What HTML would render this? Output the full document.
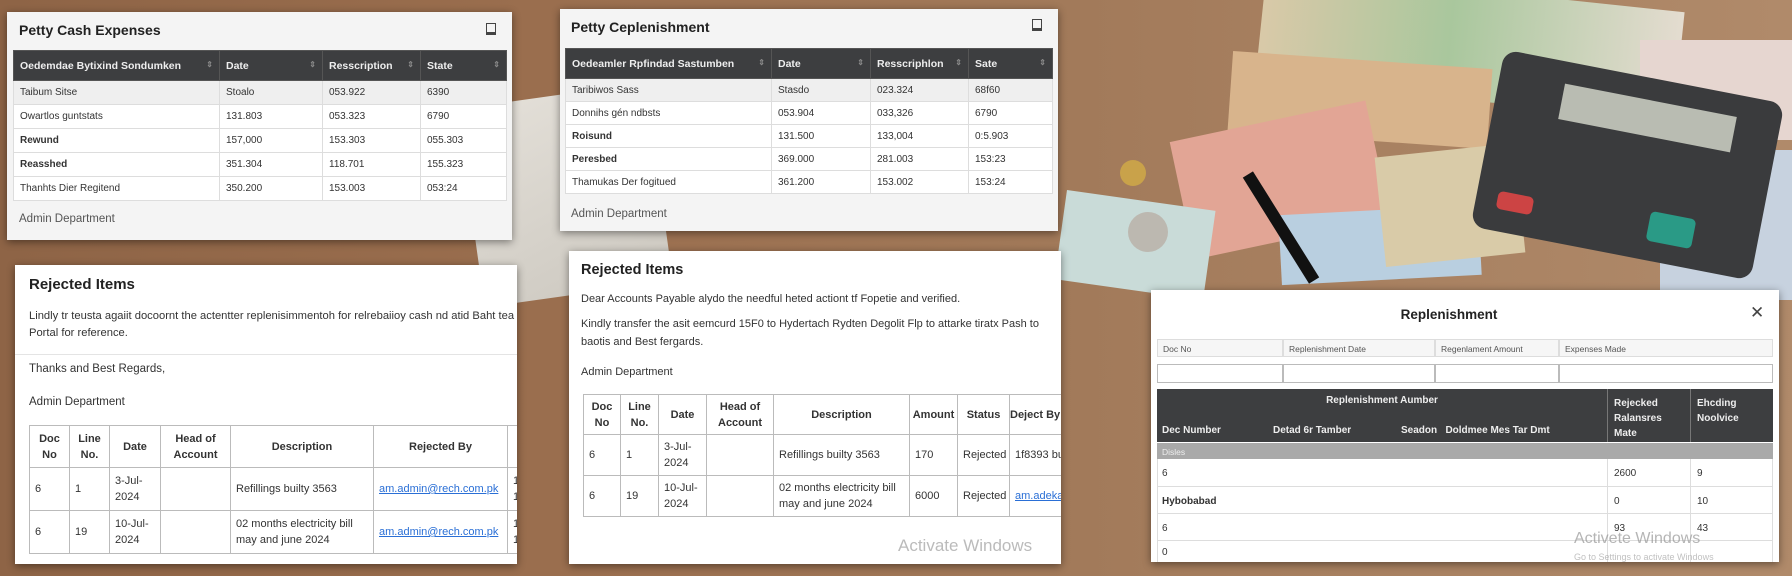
<!DOCTYPE html>
<html><head><meta charset="utf-8"><style>
*{box-sizing:border-box;margin:0;padding:0}
body{width:1792px;height:576px;overflow:hidden;position:relative;font-family:"Liberation Sans",sans-serif;color:#222;
background:linear-gradient(90deg,#8e6446 0%,#9a6e4e 30%,#a27a5a 60%,#b08a6a 100%)}
.abs{position:absolute}
.panel{position:absolute;background:#f4f4f4;box-shadow:0 2px 8px rgba(0,0,0,.45)}
.white{background:#fff}
table{border-collapse:collapse;position:absolute;table-layout:fixed}
.dt th{background:#3d3e40;color:#eee;font-size:10.5px;font-weight:bold;text-align:left;padding:0 6px;border:1px solid #555}
.dt td{font-size:10px;color:#333;padding:0 6px;border:1px solid #ddd;background:#fff}
.dt tr:first-child+tr td{background:#efefef}
.rt th{font-size:11px;font-weight:bold;border:1px solid #bbb;text-align:center;color:#333;line-height:16px}
.rt td{font-size:11px;border:1px solid #bbb;padding:0 5px;color:#333;line-height:16px}
a{color:#2a6fd6;text-decoration:underline}
.srt{float:right;color:#888;font-size:8px}
</style></head><body>
<!-- background decorations -->
<div class="abs" style="left:470px;top:95px;width:190px;height:200px;background:linear-gradient(160deg,#e8e6e0,#cfcdc6);transform:rotate(-8deg);opacity:.95"></div>
<div class="abs" style="left:1260px;top:-10px;width:420px;height:110px;background:linear-gradient(90deg,#d9c9a8,#a9c79d 45%,#e4dcd0);transform:rotate(6deg)"></div>
<div class="abs" style="left:1230px;top:60px;width:260px;height:80px;background:#d8b48c;transform:rotate(4deg)"></div>
<div class="abs" style="left:1180px;top:120px;width:200px;height:120px;background:#e2a595;transform:rotate(-12deg)"></div>
<div class="abs" style="left:1060px;top:200px;width:150px;height:90px;background:#c9dbd8;transform:rotate(8deg)"></div>
<div class="abs" style="left:1280px;top:210px;width:200px;height:70px;background:#b9cfe0;transform:rotate(-3deg)"></div>
<div class="abs" style="left:1380px;top:150px;width:140px;height:110px;background:#d9cba8;transform:rotate(-6deg)"></div>
<div class="abs" style="left:1640px;top:40px;width:152px;height:100px;background:#e6d6d0"></div>
<div class="abs" style="left:1660px;top:150px;width:132px;height:150px;background:#c7d2df"></div>
<div class="abs" style="left:1485px;top:75px;width:285px;height:180px;background:#3a3b3d;border-radius:14px;transform:rotate(11deg)"></div>
<div class="abs" style="left:1560px;top:100px;width:175px;height:36px;background:#b9bcb2;transform:rotate(11deg)"></div>
<div class="abs" style="left:1648px;top:215px;width:46px;height:30px;background:#2a9a86;border-radius:5px;transform:rotate(11deg)"></div>
<div class="abs" style="left:1497px;top:194px;width:36px;height:18px;background:#c44;border-radius:5px;transform:rotate(11deg)"></div>
<div class="abs" style="left:1275px;top:165px;width:12px;height:125px;background:#111;transform:rotate(-32deg)"></div>
<div class="abs" style="left:1120px;top:160px;width:26px;height:26px;border-radius:50%;background:#c9a24a"></div>
<div class="abs" style="left:1128px;top:212px;width:40px;height:40px;border-radius:50%;background:#bcb8b0"></div>

<!-- Panel 1 -->
<div class="panel" style="left:7px;top:12px;width:505px;height:228px">
 <div class="abs" style="left:12px;top:10px;font-size:14px;font-weight:bold;color:#222">Petty Cash Expenses</div>
 <div class="abs" style="left:479px;top:11px;width:10px;height:12px;border:1.5px solid #444;border-bottom-width:3px"></div>
 <table class="dt" style="left:6px;top:38px;width:493px">
  <colgroup><col style="width:206px"><col style="width:103px"><col style="width:98px"><col style="width:86px"></colgroup>
  <tr style="height:30px"><th>Oedemdae Bytixind Sondumken<span class="srt">⇕</span></th><th>Date<span class="srt">⇕</span></th><th>Resscription<span class="srt">⇕</span></th><th>State<span class="srt">⇕</span></th></tr>
  <tr style="height:24px"><td>Taibum Sitse</td><td>Stoalo</td><td>053.922</td><td>6390</td></tr>
  <tr style="height:24px"><td>Owartlos guntstats</td><td>131.803</td><td>053.323</td><td>6790</td></tr>
  <tr style="height:24px"><td style="font-weight:bold">Rewund</td><td>157,000</td><td>153.303</td><td>055.303</td></tr>
  <tr style="height:24px"><td style="font-weight:bold">Reasshed</td><td>351.304</td><td>118.701</td><td>155.323</td></tr>
  <tr style="height:24px"><td>Thanhts Dier Regitend</td><td>350.200</td><td>153.003</td><td>053:24</td></tr>
 </table>
 <div class="abs" style="left:12px;top:201px;font-size:11.5px;color:#555">Admin Department</div>
</div>

<!-- Panel 3 -->
<div class="panel" style="left:560px;top:9px;width:498px;height:222px">
 <div class="abs" style="left:11px;top:10px;font-size:14px;font-weight:bold;color:#222">Petty Ceplenishment</div>
 <div class="abs" style="left:472px;top:10px;width:10px;height:12px;border:1.5px solid #444;border-bottom-width:3px"></div>
 <table class="dt" style="left:5px;top:39px;width:487px">
  <colgroup><col style="width:206px"><col style="width:99px"><col style="width:98px"><col style="width:84px"></colgroup>
  <tr style="height:30px"><th>Oedeamler Rpfindad Sastumben<span class="srt">⇕</span></th><th>Date<span class="srt">⇕</span></th><th>Resscriphlon<span class="srt">⇕</span></th><th>Sate<span class="srt">⇕</span></th></tr>
  <tr style="height:23px"><td>Taribiwos Sass</td><td>Stasdo</td><td>023.324</td><td>68f60</td></tr>
  <tr style="height:23px"><td>Donnihs gén ndbsts</td><td>053.904</td><td>033,326</td><td>6790</td></tr>
  <tr style="height:23px"><td style="font-weight:bold">Roisund</td><td>131.500</td><td>133,004</td><td>0:5.903</td></tr>
  <tr style="height:23px"><td style="font-weight:bold">Peresbed</td><td>369.000</td><td>281.003</td><td>153:23</td></tr>
  <tr style="height:23px"><td>Thamukas Der fogitued</td><td>361.200</td><td>153.002</td><td>153:24</td></tr>
 </table>
 <div class="abs" style="left:11px;top:199px;font-size:11.5px;color:#555">Admin Department</div>
</div>

<!-- Panel 2 -->
<div class="panel white" style="left:15px;top:265px;width:502px;height:299px;overflow:hidden">
 <div class="abs" style="left:14px;top:11px;font-size:15px;font-weight:bold;color:#222">Rejected Items</div>
 <div class="abs" style="left:14px;top:43px;font-size:11.2px;line-height:17px;color:#333;white-space:nowrap">Lindly tr teusta agaiit docoornt the actentter replenisimmentoh for relrebaiioy cash nd atid Baht tea<br>Portal for reference.</div>
 <div class="abs" style="left:0;top:89px;width:502px;height:1px;background:#e4e4e4"></div>
 <div class="abs" style="left:14px;top:98px;font-size:11.5px;color:#333">Thanks and Best Regards,</div>
 <div class="abs" style="left:14px;top:131px;font-size:11.5px;color:#333">Admin Department</div>
 <table class="rt" style="left:14px;top:160px;width:520px">
  <colgroup><col style="width:40px"><col style="width:40px"><col style="width:51px"><col style="width:70px"><col style="width:143px"><col style="width:134px"><col style="width:42px"></colgroup>
  <tr style="height:42px"><th>Doc<br>No</th><th>Line<br>No.</th><th>Date</th><th>Head of<br>Account</th><th>Description</th><th>Rejected By</th><th></th></tr>
  <tr style="height:43px"><td>6</td><td>1</td><td>3-Jul-<br>2024</td><td></td><td>Refillings builty 3563</td><td><a>am.admin@rech.com.pk</a></td><td>1<br>1</td></tr>
  <tr style="height:43px"><td>6</td><td>19</td><td>10-Jul-<br>2024</td><td></td><td>02 months electricity bill<br>may and june 2024</td><td><a>am.admin@rech.com.pk</a></td><td>1<br>1</td></tr>
 </table>
</div>

<!-- Panel 4 -->
<div class="panel white" style="left:569px;top:251px;width:492px;height:313px;overflow:hidden">
 <div class="abs" style="left:12px;top:11px;font-size:14.5px;font-weight:bold;color:#222">Rejected Items</div>
 <div class="abs" style="left:12px;top:42px;font-size:11px;color:#333;white-space:nowrap">Dear Accounts Payable alydo the needful heted actiont tf Fopetie and verified.</div>
 <div class="abs" style="left:12px;top:64px;font-size:11px;line-height:18px;color:#333;white-space:nowrap">Kindly transfer the asit eemcurd 15F0 to Hydertach Rydten Degolit Flp to attarke tiratx Pash to<br>baotis and Best fergards.</div>
 <div class="abs" style="left:12px;top:115px;font-size:11px;color:#333">Admin Department</div>
 <table class="rt" style="left:14px;top:143px;width:520px">
  <colgroup><col style="width:37px"><col style="width:38px"><col style="width:48px"><col style="width:67px"><col style="width:136px"><col style="width:48px"><col style="width:52px"><col style="width:94px"></colgroup>
  <tr style="height:40px"><th>Doc<br>No</th><th>Line<br>No.</th><th>Date</th><th>Head of<br>Account</th><th>Description</th><th>Amount</th><th>Status</th><th style="text-align:left">Deject By</th></tr>
  <tr style="height:41px"><td>6</td><td>1</td><td>3-Jul-<br>2024</td><td></td><td>Refillings builty 3563</td><td>170</td><td>Rejected</td><td>1f8393 bu</td></tr>
  <tr style="height:41px"><td>6</td><td>19</td><td>10-Jul-<br>2024</td><td></td><td>02 months electricity bill<br>may and june 2024</td><td>6000</td><td>Rejected</td><td><a>am.adeka</a></td></tr>
 </table>
 <div class="abs" style="left:329px;top:285px;font-size:17px;color:#bbb">Activate Windows</div>
</div>

<!-- Panel 5 -->
<div class="panel white" style="left:1151px;top:290px;width:628px;height:272px;overflow:hidden">
 <div class="abs" style="left:0;top:17px;width:596px;text-align:center;font-size:13.5px;font-weight:bold;color:#222">Replenishment</div>
 <div class="abs" style="left:599px;top:13px;font-size:17px;color:#444">✕</div>
 <div class="abs" style="left:6px;top:49px;width:616px;height:18px;display:flex;font-size:8.5px;color:#555">
  <div style="width:126px;border:1px solid #ddd;background:#f6f6f6;padding:4px 5px">Doc No</div>
  <div style="width:152px;border:1px solid #ddd;background:#f6f6f6;padding:4px 5px">Replenishment Date</div>
  <div style="width:124px;border:1px solid #ddd;background:#f6f6f6;padding:4px 5px">Regenlament Amount</div>
  <div style="width:214px;border:1px solid #ddd;background:#f6f6f6;padding:4px 5px">Expenses Made</div>
 </div>
 <div class="abs" style="left:6px;top:74px;width:616px;height:19px;display:flex">
  <div style="width:126px;border:1px solid #bbb"></div><div style="width:152px;border:1px solid #bbb"></div><div style="width:124px;border:1px solid #bbb"></div><div style="width:214px;border:1px solid #bbb"></div>
 </div>
 <div class="abs" style="left:6px;top:99px;width:616px;height:53px;background:#3d3e40;color:#eee;font-size:10px;font-weight:bold">
  <div class="abs" style="left:0;top:6px;width:450px;text-align:center">Replenishment Aumber</div>
  <div class="abs" style="left:5px;top:36px">Dec Number</div>
  <div class="abs" style="left:116px;top:36px">Detad 6r Tamber</div>
  <div class="abs" style="left:244px;top:36px">Seadon &nbsp; Doldmee Mes Tar Dmt</div>
  <div class="abs" style="left:450px;top:0;width:1px;height:53px;background:#777"></div>
  <div class="abs" style="left:533px;top:0;width:1px;height:53px;background:#777"></div>
  <div class="abs" style="left:457px;top:7px;line-height:15px">Rejecked<br>Ralansres<br>Mate</div>
  <div class="abs" style="left:540px;top:7px;line-height:15px">Ehcding<br>Noolvice</div>
 </div>
 <div class="abs" style="left:6px;top:153px;width:616px;height:16px;background:#a9a9a9;color:#eee;font-size:8.5px;padding:4px 5px">Disles</div>
 <div class="abs" style="left:6px;top:169px;width:616px;font-size:10px;color:#333">
  <div style="height:28px;border-bottom:1px solid #ddd;position:relative"><span class="abs" style="left:5px;top:9px">6</span><span class="abs" style="left:457px;top:9px">2600</span><span class="abs" style="left:540px;top:9px">9</span></div>
  <div style="height:27px;border-bottom:1px solid #ddd;position:relative"><span class="abs" style="left:5px;top:9px;font-weight:bold">Hybobabad</span><span class="abs" style="left:457px;top:9px">0</span><span class="abs" style="left:540px;top:9px">10</span></div>
  <div style="height:27px;border-bottom:1px solid #ddd;position:relative"><span class="abs" style="left:5px;top:9px">6</span><span class="abs" style="left:457px;top:9px">93</span><span class="abs" style="left:540px;top:9px">43</span></div>
  <div style="height:20px;position:relative"><span class="abs" style="left:5px;top:6px">0</span></div>
  <div class="abs" style="left:0;top:0;width:1px;height:110px;background:#ddd"></div>
  <div class="abs" style="left:450px;top:0;width:1px;height:110px;background:#ddd"></div>
  <div class="abs" style="left:533px;top:0;width:1px;height:110px;background:#ddd"></div>
  <div class="abs" style="left:615px;top:0;width:1px;height:110px;background:#ddd"></div>
 </div>
 <div class="abs" style="left:423px;top:240px;font-size:16px;color:rgba(150,150,150,.7)">Activete Windows</div>
 <div class="abs" style="left:423px;top:262px;font-size:9px;color:rgba(150,150,150,.6)">Go to Settings to activate Windows</div>
</div>
</body></html>
